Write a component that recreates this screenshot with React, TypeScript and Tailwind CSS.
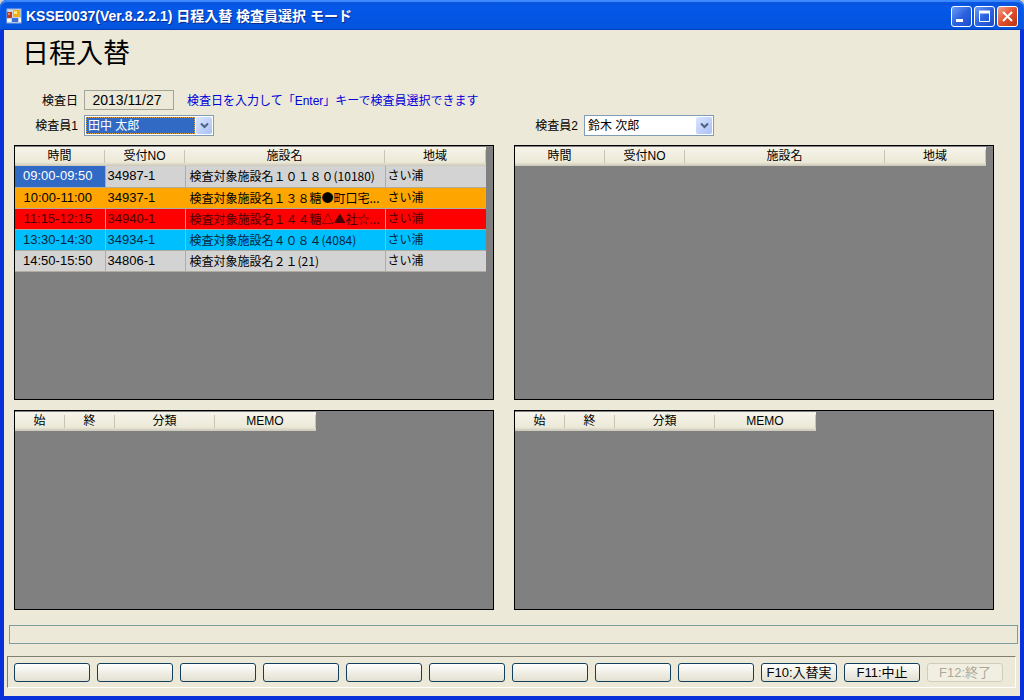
import React, { useState } from 'react';
import clsx from 'clsx';

type ScheduleRow = {
  time: string;
  receiptNo: string;
  facility: string;
  area: string;
  tone: string;
};

const schedule: ScheduleRow[] = [
  { time: '09:00-09:50', receiptNo: '34987-1', facility: '検査対象施設名10180(10180)', area: 'さい浦', tone: 'bg-[#d3d3d3] text-black' },
  { time: '10:00-11:00', receiptNo: '34937-1', facility: '検査対象施設名138糖●町口宅...', area: 'さい浦', tone: 'bg-[#ffa500] text-black' },
  { time: '11:15-12:15', receiptNo: '34940-1', facility: '検査対象施設名144糖△▲社☆...', area: 'さい浦', tone: 'bg-[#ff0000] text-[#4a0000]' },
  { time: '13:30-14:30', receiptNo: '34934-1', facility: '検査対象施設名4084(4084)', area: 'さい浦', tone: 'bg-[#00bfff] text-[#06263c]' },
  { time: '14:50-15:50', receiptNo: '34806-1', facility: '検査対象施設名21(21)', area: 'さい浦', tone: 'bg-[#d3d3d3] text-black' },
].map((row) => ({ ...row, facility: widenName(row.facility) }));

const scheduleColumns = [
  { label: '時間', width: 'w-[90px]' },
  { label: '受付NO', width: 'w-20' },
  { label: '施設名', width: 'w-[200px]' },
  { label: '地域', width: 'w-[101px]' },
];

const memoColumns = [
  { label: '始', width: 'w-[50px]' },
  { label: '終', width: 'w-[50px]' },
  { label: '分類', width: 'w-[100px]' },
  { label: 'MEMO', width: 'w-[101px]' },
];

const functionKeys = ['', '', '', '', '', '', '', '', '', 'F10:入替実', 'F11:中止', 'F12:終了'];

// Facility numbers are full width outside the parentheses
function widenName(name: string) {
  const [head, ...rest] = name.split('(');
  const wide = head.replace(/[0-9]/g, (d) => String.fromCharCode(d.charCodeAt(0) + 0xfee0));
  return [wide, ...rest].join('(');
}

function AppIcon() {
  return (
    <svg width="16" height="16" viewBox="0 0 16 16" aria-hidden="true">
      <rect x="1" y="1" width="14" height="14" fill="#c9d6ea" stroke="#9db4d8" />
      <rect x="1" y="4" width="5" height="6" fill="#c03a20" />
      <rect x="2" y="5" width="2" height="2" fill="#ee8a6a" />
      <rect x="7" y="2" width="7" height="7" fill="#f0b010" />
      <rect x="8" y="3" width="3" height="3" fill="#ffe680" />
      <rect x="6" y="10" width="6" height="4" fill="#3a6fd8" />
      <rect x="1" y="11" width="4" height="3" fill="#f4f6fa" />
      <rect x="13" y="10" width="2" height="4" fill="#f4f6fa" />
    </svg>
  );
}

function WindowButton({ label, close, children }: { label: string; close?: boolean; children: React.ReactNode }) {
  return (
    <button
      aria-label={label}
      className={clsx(
        'flex size-[21px] items-center justify-center rounded-[3px] border border-white bg-linear-to-br',
        close ? 'from-[#f0a088] via-[#e0502c] to-[#b83210]' : 'from-[#6d9cf5] via-[#2c62e0] to-[#1a4ccc]'
      )}
    >
      <svg width="19" height="19" viewBox="0 0 19 19" fill="none" stroke="white" aria-hidden="true">
        {children}
      </svg>
    </button>
  );
}

function TitleBar() {
  return (
    <header className="flex h-[30px] items-center justify-between rounded-t-[7px] bg-linear-to-b from-[#0a50d8] from-0% via-[#0458e8] via-25% to-[#0353dd] pt-px pr-[6px] pl-[6px] shadow-[inset_0_2px_1px_#3d8bff,inset_0_-1px_0_#0040bc]">
      <div className="flex items-center gap-1 text-[14px] font-bold whitespace-pre text-white [text-shadow:1px_1px_#0a2a90]">
        <AppIcon />
        <span>KSSE0037(Ver.8.2.2.1) 日程入替 検査員選択 モード</span>
      </div>
      <div className="flex gap-[2px] pt-px">
        <WindowButton label="最小化">
          <path d="M4 13.500h7" strokeWidth="3" />
        </WindowButton>
        <WindowButton label="最大化">
          <path d="M4.500 4.500h10v10h-10z" />
          <path d="M4 5h11" strokeWidth="3" />
        </WindowButton>
        <WindowButton label="閉じる" close>
          <path d="M5 5l9 9M14 5l-9 9" strokeWidth="2" />
        </WindowButton>
      </div>
    </header>
  );
}

function InspectorSelect({ id, label, options, active }: { id: string; label: string; options: string[]; active?: boolean }) {
  const [value, setValue] = useState(options[0]);

  return (
    <div className="flex items-center gap-[6px]">
      <label htmlFor={id} className="w-16 text-right">
        {label}
      </label>
      <div className="relative flex h-[21px] w-[130px] border border-[#7f9db9] bg-white p-px">
        <select
          id={id}
          value={value}
          onChange={(e) => setValue(e.target.value)}
          className={clsx(
            'w-[109px] appearance-none border px-px pt-px leading-[14px] outline-none',
            active ? 'border-dotted border-[#e0a040] bg-[#316ac5] text-white' : 'border-transparent bg-white text-black'
          )}
        >
          {options.map((name) => (
            <option key={name}>{name}</option>
          ))}
        </select>
        <span className="pointer-events-none absolute inset-y-px right-px flex w-4 items-center justify-center rounded-[2px] bg-linear-to-br from-[#dbe6ff] to-[#a9c0f4]">
          <svg width="9" height="7" viewBox="0 0 9 7" fill="none" stroke="#4d6185" strokeWidth="2" aria-hidden="true">
            <path d="M1 1.500l3.500 3.500L8 1.500" />
          </svg>
        </span>
      </div>
    </div>
  );
}

function GridHead({ columns }: { columns: { label: string; width: string }[] }) {
  return (
    <thead>
      <tr className="h-[19px] bg-linear-to-b from-[#f6f4ea] via-[#ece9d8] via-80% to-[#cbc7b8]">
        {columns.map((col) => (
          <th key={col.label} className={clsx('p-0 font-normal', col.width)}>
            <div className="border-r border-[#c8c5b2] leading-[13px]">{col.label}</div>
          </th>
        ))}
      </tr>
    </thead>
  );
}

function ScheduleGrid({ rows }: { rows: ScheduleRow[] }) {
  const [selected, setSelected] = useState(0);

  return (
    <div className="min-h-[255px] overflow-hidden border border-black bg-[#808080] pt-px">
      <table className="w-[471px] table-fixed border-collapse">
        <GridHead columns={scheduleColumns} />
        <tbody>
          {rows.map((row, i) => (
            <tr key={row.receiptNo} onClick={() => setSelected(i)} className={clsx('h-[21px] border-b border-[#b0aca0]', row.tone)}>
              <td className={clsx('border-r border-[#b0aca0] p-0 pr-1 text-center text-[13px] leading-5', i === selected && 'bg-[#316ac5] text-white')}>
                {row.time}
              </td>
              <td className="border-r border-[#b0aca0] py-0 pl-[2px] text-[13px] leading-5">{row.receiptNo}</td>
              <td className="overflow-hidden border-r border-[#b0aca0] py-0 pl-1 font-['Noto_Sans_CJK_JP',sans-serif] leading-5 whitespace-nowrap">
                {row.facility}
              </td>
              <td className="py-0 pl-[2px] leading-5">{row.area}</td>
            </tr>
          ))}
        </tbody>
      </table>
    </div>
  );
}

function MemoGrid() {
  return (
    <div className="min-h-[200px] overflow-hidden border border-black bg-[#808080] pt-px">
      <table className="w-[301px] table-fixed border-collapse">
        <GridHead columns={memoColumns} />
      </table>
    </div>
  );
}

export default function App() {
  const [date, setDate] = useState('2013/11/27');

  return (
    <div className="min-h-screen bg-[#d8d0c8] font-['Liberation_Sans','Noto_Sans_CJK_JP',sans-serif] text-[12px] leading-4 text-black">
      <div className="flex min-h-screen flex-col rounded-t-[7px] bg-[#0831d9]">
        <TitleBar />
        <main className="mx-1 mb-1 flex flex-1 flex-col bg-[#ece9d8]">
          <h1 className="px-[18px] pt-1 text-[27px] leading-10">日程入替</h1>

          <div className="mt-4 flex items-center pl-4">
            <label htmlFor="date" className="w-[58px] pt-px text-right">
              検査日
            </label>
            <input
              id="date"
              value={date}
              onChange={(e) => setDate(e.target.value)}
              className="ml-[6px] h-5 w-[90px] border border-[#a0a598] bg-transparent pr-1 text-center text-[14px] outline-none"
            />
            <p className="ml-[13px] pt-px text-[#0000d8]">検査日を入力して「Enter」キーで検査員選択できます</p>
          </div>

          <div className="mt-[5px] grid grid-cols-2 gap-x-5 pr-[26px] pl-[10px]">
            <InspectorSelect id="inspector1" label="検査員1" options={['田中 太郎', '鈴木 次郎']} active />
            <InspectorSelect id="inspector2" label="検査員2" options={['鈴木 次郎', '田中 太郎']} />
          </div>

          <div className="mt-[9px] grid grid-cols-2 gap-x-5 gap-y-[10px] pr-[26px] pl-[10px]">
            <ScheduleGrid rows={schedule} />
            <ScheduleGrid rows={[]} />
            <MemoGrid />
            <MemoGrid />
          </div>

          <div className="mt-[15px] mr-[2px] ml-[5px] h-[19px] border border-[#7f9d9f]" role="status" />

          <nav className="mt-3 mr-1 ml-[3px] flex gap-[7px] border border-t-[#808070] border-r-white border-b-white border-l-[#808070] pt-[6px] pr-3 pb-[5px] pl-[6px]">
            {functionKeys.map((key, i) => {
              const disabled = i === 11;
              return (
                <button
                  key={i}
                  disabled={disabled}
                  aria-label={key || `F${i + 1}`}
                  className={clsx(
                    'h-[19px] min-w-0 flex-1 overflow-hidden rounded-[3px] border text-[13px] leading-4 whitespace-nowrap',
                    disabled
                      ? 'border-[#cfccbc] bg-[#f1efe2] text-[#aca899]'
                      : 'border-[#123f5c] bg-linear-to-b from-white via-[#f0efe6] to-[#e4e0d2]'
                  )}
                >
                  {key}
                </button>
              );
            })}
          </nav>
        </main>
      </div>
    </div>
  );
}
